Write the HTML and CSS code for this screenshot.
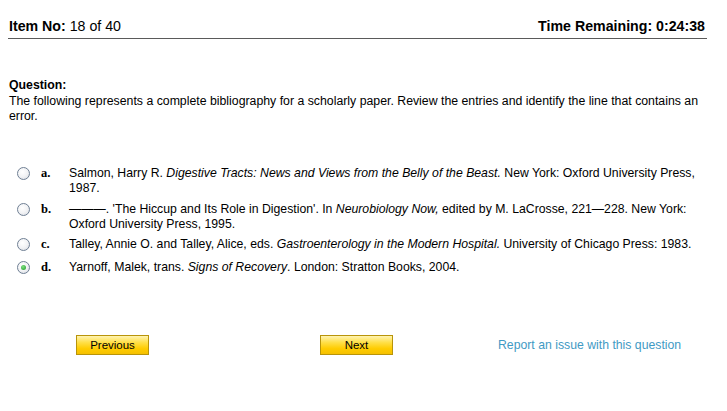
FILE: index.html
```html
<!DOCTYPE html>
<html>
<head>
<meta charset="utf-8">
<link rel="stylesheet" href="styles.css">
</head>
<body>
<div class="page">
  <header class="topbar">
    <div class="item"><b>Item No:</b> 18 of 40</div>
    <div class="timer"><b>Time Remaining: 0:24:38</b></div>
  </header>
  <section class="question">
    <div class="qlabel">Question:</div>
    <div class="qtext">The following represents a complete bibliography for a scholarly paper. Review the entries and identify the line that contains an error.</div>
  </section>
  <ul class="options">
    <li class="opt opt-a">
      <span class="radio"></span><span class="letter">a.</span>
      <span class="txt">Salmon, Harry R. <i>Digestive Tracts: News and Views from the Belly of the Beast.</i> New York: Oxford University Press, 1987.</span>
    </li>
    <li class="opt opt-b">
      <span class="radio"></span><span class="letter">b.</span>
      <span class="txt">&mdash;&mdash;&mdash;. 'The Hiccup and Its Role in Digestion'. In <i>Neurobiology Now,</i> edited by M. LaCrosse, 221&mdash;228. New York: Oxford University Press, 1995.</span>
    </li>
    <li class="opt opt-c">
      <span class="radio"></span><span class="letter">c.</span>
      <span class="txt">Talley, Annie O. and Talley, Alice, eds. <i>Gastroenterology in the Modern Hospital.</i> University of Chicago Press: 1983.</span>
    </li>
    <li class="opt opt-d">
      <span class="radio checked"></span><span class="letter">d.</span>
      <span class="txt">Yarnoff, Malek, trans. <i>Signs of Recovery</i>. London: Stratton Books, 2004.</span>
    </li>
  </ul>
  <div class="actions">
    <button class="btn prev">Previous</button>
    <button class="btn next">Next</button>
    <a class="report" href="#">Report an issue with this question</a>
  </div>
</div>
</body>
</html>
```

FILE: styles.css
```css
html, body { margin: 0; padding: 0; background: #fff; }
body { font-family: "Liberation Sans", Arial, sans-serif; color: #000; }
.page { padding: 0 8px; width: 699px; }
.topbar {
  display: flex; justify-content: space-between; align-items: flex-end;
  height: 39px; box-sizing: border-box; padding: 0 2px 4px 1px;
  border-bottom: 1px solid #5a5a5a;
  font-size: 14.2px;
}
.question { padding-top: 39px; font-size: 12.3px; line-height: 15px; padding-left: 1px; }
.qlabel { font-weight: bold; margin-bottom: 1px; }
.options { list-style: none; margin: 0; padding: 42px 0 0 0; font-size: 12.25px; line-height: 15px; }
.opt { display: flex; align-items: flex-start; margin-bottom: 6px; }
.opt-b { margin-bottom: 5px; }
.opt-c { margin-bottom: 8px; }
.radio {
  flex: none; width: 11px; height: 11px; border: 1px solid #6f7f94; border-radius: 50%;
  margin: 1px 0 0 9px; box-sizing: content-box;
  background: radial-gradient(circle at 40% 35%, #fff 0, #f2f3f5 50%, #d6d9df 100%);
  position: relative;
}
.radio.checked::after {
  content: ""; position: absolute; left: 3px; top: 3px; width: 5px; height: 5px; border-radius: 50%;
  background: radial-gradient(circle at 40% 35%, #7fe07f, #1e9a2a);
}
.letter { flex: none; width: 28px; margin-left: 11px; font-family: "Liberation Serif", serif; font-weight: bold; font-size: 12.5px; }
.txt { flex: 1; padding-right: 10px; }
.actions { display: flex; align-items: center; padding: 54px 0 0 68px; }
.btn {
  width: 73px; height: 20px; padding: 0; font-family: "Liberation Sans", Arial, sans-serif; font-size: 11.5px;
  color: #000; border: 1px solid #b8940a;
  background: linear-gradient(#fff3b0 0%, #ffe04a 35%, #ffcc00 70%, #f5c000 100%);
}
.next { margin-left: 171px; }
.report { margin-left: 105px; color: #3f9ac4; text-decoration: none; font-size: 12.25px; }
```
